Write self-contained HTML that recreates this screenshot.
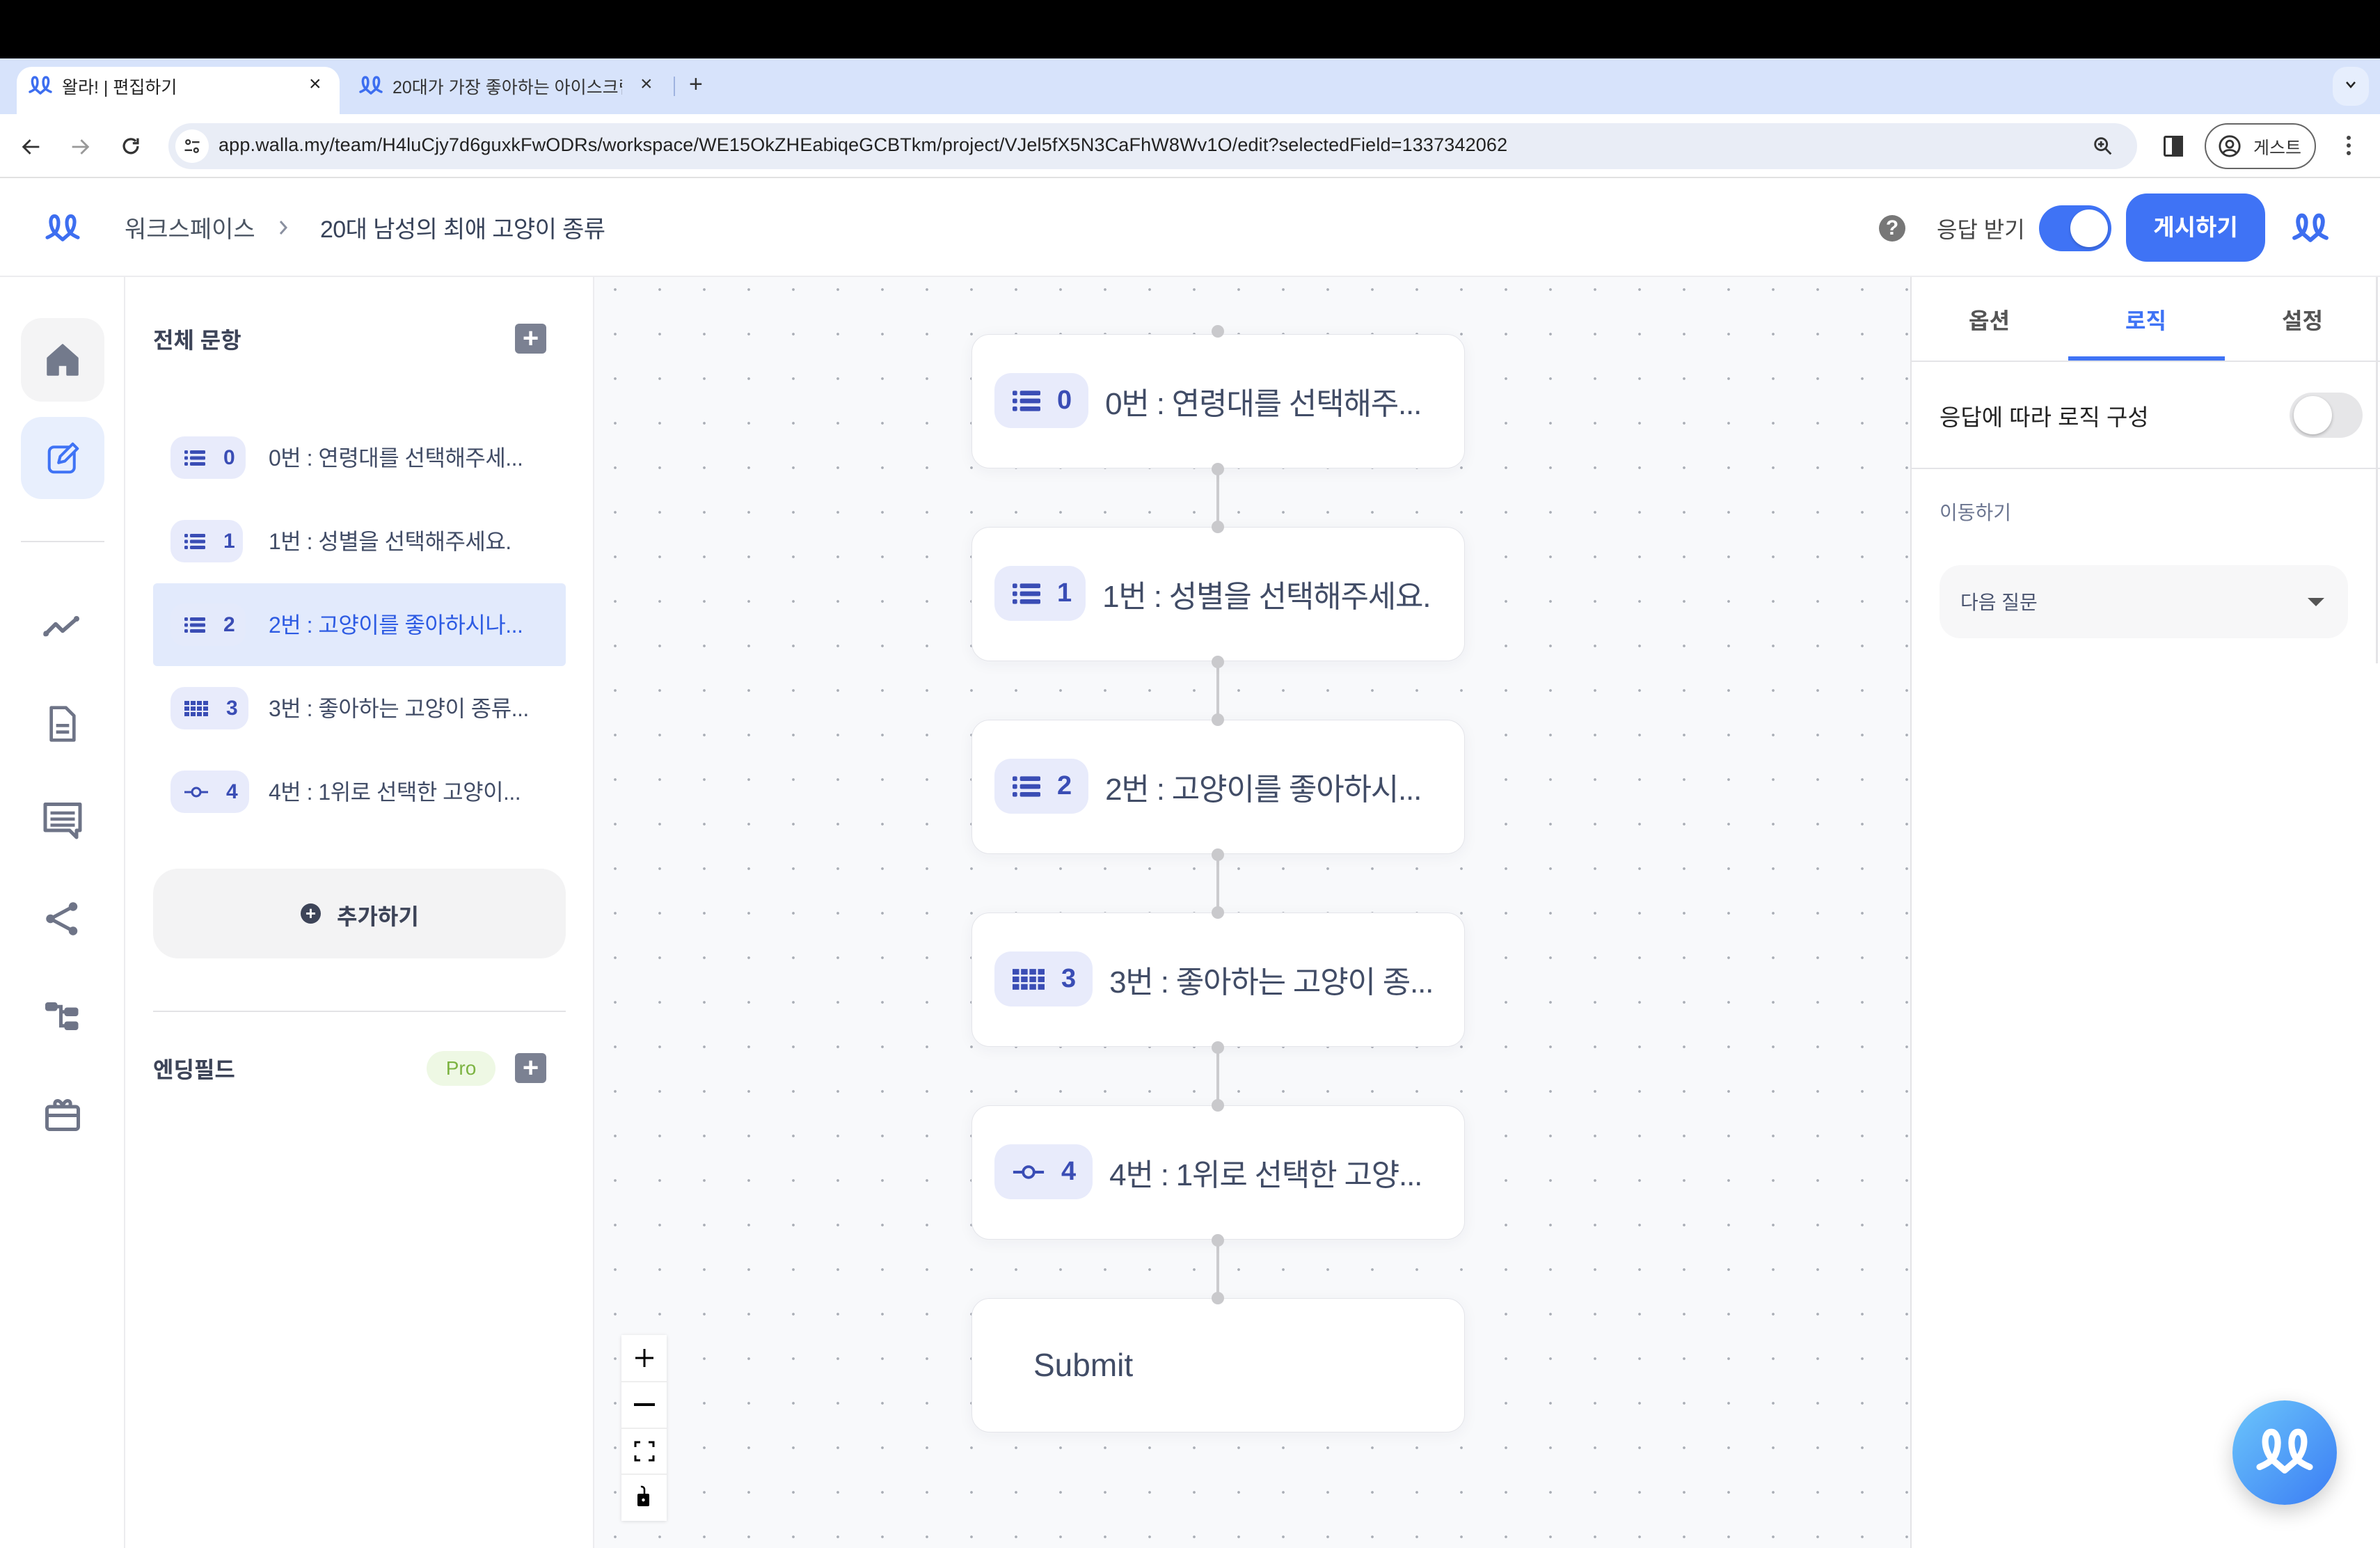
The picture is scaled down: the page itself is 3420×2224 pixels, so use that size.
<!DOCTYPE html>
<html><head><meta charset="utf-8"><style>
*{margin:0;padding:0;box-sizing:border-box}
body{width:3420px;height:2224px;position:relative;overflow:hidden;background:#fff;font-family:"Liberation Sans","Noto Sans CJK KR",sans-serif;}
.a{position:absolute}
.t{white-space:nowrap}
.card{position:absolute;left:1396px;width:709px;height:193px;background:#fff;border:1.5px solid #e4e5ea;border-radius:26px;box-shadow:0 4px 22px rgba(30,40,80,.05)}
.card .row{position:absolute;left:32px;top:55px;height:79px;display:flex;align-items:center}
.bdg{height:79px;border-radius:24px;background:#e8ebfb;display:flex;align-items:center;padding:0 24px 0 26px;gap:24px;color:#3a4db5;font-size:38px;font-weight:bold}
.ct{margin-left:24px;font-size:44px;color:#414c66;white-space:nowrap;letter-spacing:-1.2px}
.h{position:absolute;width:18px;height:18px;border-radius:50%;background:#c9c9cc;left:1741px}
.ln{position:absolute;left:1748px;width:4px;background:#cbcbce}
.li{position:absolute;left:220px;width:593px;height:119px;display:flex;align-items:center}
.lb{margin-left:25px;width:108px;height:61px;border-radius:20px;background:#e8ebfb;display:flex;align-items:center;padding-left:20px;gap:26px;color:#3a4db5;font-size:30px;font-weight:bold}
.lt{margin-left:33px;font-size:32px;color:#414c66;white-space:nowrap;letter-spacing:-0.5px;margin-top:-3px}
</style></head><body>
<div class="a" style="left:0;top:0;width:3420px;height:84px;background:#000"></div>
<div class="a" style="left:0;top:84px;width:3420px;height:80px;background:#d7e3fb"></div>
<div class="a" style="left:24px;top:96px;width:464px;height:70px;background:#fff;border-radius:22px 22px 0 0"></div>
<svg class="a" style="left:40px;top:108px" width="36" height="30" viewBox="0 0 34 30"><path d="M2 24 Q7 22 10 19 C14 14 14 3 9 3 C4 3 4 14 10 20 L17 26 L24 20 C30 14 30 3 25 3 C20 3 20 14 24 19 Q27 22 32 24" fill="none" stroke="#3d6ef0" stroke-width="3.5" stroke-linecap="round" stroke-linejoin="round"/></svg>
<div class="a t" style="left:89px;top:106px;font-size:25px;color:#222">왈라! | 편집하기</div>
<div class="a t" style="left:444px;top:104px;font-size:30px;color:#222">×</div>
<svg class="a" style="left:515px;top:108px" width="36" height="30" viewBox="0 0 34 30"><path d="M2 24 Q7 22 10 19 C14 14 14 3 9 3 C4 3 4 14 10 20 L17 26 L24 20 C30 14 30 3 25 3 C20 3 20 14 24 19 Q27 22 32 24" fill="none" stroke="#3d6ef0" stroke-width="3.5" stroke-linecap="round" stroke-linejoin="round"/></svg>
<div class="a t" style="left:564px;top:106px;font-size:25px;color:#333;width:330px;overflow:hidden">20대가 가장 좋아하는 아이스크림 🍦</div>
<div class="a t" style="left:920px;top:104px;font-size:30px;color:#333">×</div>
<div class="a" style="left:968px;top:110px;width:2px;height:28px;background:#9fb3e0"></div>
<div class="a t" style="left:990px;top:102px;font-size:34px;color:#333">+</div>
<div class="a" style="left:3352px;top:96px;width:52px;height:56px;background:#e6eefd;border-radius:20px"></div>
<svg class="a" style="left:3369px;top:115px" width="18" height="14"><path d="M3 3 L9 10 L15 3" fill="none" stroke="#222" stroke-width="2.5"/></svg>
<div class="a" style="left:0;top:164px;width:3420px;height:92px;background:#fff;border-bottom:2px solid #e1e1e1"></div>
<svg class="a" style="left:28px;top:194px" width="34" height="34" viewBox="0 0 24 24"><path d="M20 12H5M11 5l-7 7 7 7" fill="none" stroke="#333" stroke-width="2"/></svg>
<svg class="a" style="left:98px;top:194px" width="34" height="34" viewBox="0 0 24 24"><path d="M4 12h15M13 5l7 7-7 7" fill="none" stroke="#999" stroke-width="2"/></svg>
<svg class="a" style="left:171px;top:193px" width="34" height="34" viewBox="0 0 24 24"><path d="M19 12a7 7 0 1 1-2-5M19 4v5h-5" fill="none" stroke="#333" stroke-width="2.3"/></svg>
<div class="a" style="left:242px;top:177px;width:2829px;height:66px;background:#e9edf6;border-radius:33px"></div>
<div class="a" style="left:252px;top:186px;width:48px;height:48px;background:#fff;border-radius:50%"></div>
<svg class="a" style="left:262px;top:196px" width="28" height="28" viewBox="0 0 24 24"><circle cx="7" cy="7" r="2.5" fill="none" stroke="#333" stroke-width="2"/><path d="M12 7h9M3 17h9" stroke="#333" stroke-width="2"/><circle cx="17" cy="17" r="2.5" fill="none" stroke="#333" stroke-width="2"/></svg>
<div class="a t" style="left:314px;top:193px;font-size:27px;color:#222;letter-spacing:0.15px">app.walla.my/team/H4luCjy7d6guxkFwODRs/workspace/WE15OkZHEabiqeGCBTkm/project/VJel5fX5N3CaFhW8Wv1O/edit?selectedField=1337342062</div>
<svg class="a" style="left:3005px;top:193px" width="34" height="34" viewBox="0 0 24 24"><circle cx="10" cy="10" r="6" fill="none" stroke="#333" stroke-width="2"/><path d="M14.5 14.5L20 20M10 7v6M7 10h6" stroke="#333" stroke-width="2"/></svg>
<div class="a" style="left:3109px;top:195px;width:28px;height:30px;border:3px solid #333;border-radius:3px"></div>
<div class="a" style="left:3121px;top:195px;width:16px;height:30px;background:#333"></div>
<div class="a" style="left:3168px;top:177px;width:160px;height:66px;border:2px solid #666;border-radius:33px"></div>
<svg class="a" style="left:3187px;top:193px" width="34" height="34" viewBox="0 0 24 24"><circle cx="12" cy="12" r="10" fill="none" stroke="#333" stroke-width="2"/><circle cx="12" cy="10" r="3.5" fill="none" stroke="#333" stroke-width="2"/><path d="M5.5 18.5c3-3.5 10-3.5 13 0" fill="none" stroke="#333" stroke-width="2"/></svg>
<div class="a t" style="left:3238px;top:193px;font-size:25px;color:#333">게스트</div>
<div class="a" style="left:3372px;top:195px;width:6px;height:6px;border-radius:50%;background:#444;box-shadow:0 11px 0 #444,0 22px 0 #444"></div>
<div class="a" style="left:0;top:257px;width:3420px;height:141px;background:#fff;border-bottom:2px solid #ececef"></div>
<svg class="a" style="left:64px;top:306px" width="52" height="44" viewBox="0 0 34 30"><path d="M2 24 Q7 22 10 19 C14 14 14 3 9 3 C4 3 4 14 10 20 L17 26 L24 20 C30 14 30 3 25 3 C20 3 20 14 24 19 Q27 22 32 24" fill="none" stroke="#3d6ef0" stroke-width="3.5" stroke-linecap="round" stroke-linejoin="round"/></svg>
<div class="a t" style="left:179px;top:302px;font-size:34px;color:#4b5563">워크스페이스</div>
<svg class="a" style="left:398px;top:314px" width="18" height="26"><path d="M5 4l8 9-8 9" fill="none" stroke="#8a90a0" stroke-width="3"/></svg>
<div class="a t" style="left:460px;top:302px;font-size:34px;color:#374259;letter-spacing:-0.6px">20대 남성의 최애 고양이 종류</div>
<div class="a" style="left:2700px;top:309px;width:38px;height:38px;border-radius:50%;background:#777;color:#fff;font-size:30px;font-weight:bold;text-align:center;line-height:38px">?</div>
<div class="a t" style="left:2783px;top:305px;font-size:32px;color:#444">응답 받기</div>
<div class="a" style="left:2930px;top:295px;width:104px;height:66px;border-radius:33px;background:#3f73f5"></div>
<div class="a" style="left:2975px;top:301px;width:54px;height:54px;border-radius:50%;background:#fff;box-shadow:0 2px 4px rgba(0,0,0,.2)"></div>
<div class="a" style="left:3055px;top:278px;width:200px;height:98px;border-radius:30px;background:#3f73f5;color:#fff;font-size:33px;font-weight:bold;text-align:center;line-height:98px">게시하기</div>
<svg class="a" style="left:3293px;top:305px" width="54" height="46" viewBox="0 0 34 30"><path d="M2 24 Q7 22 10 19 C14 14 14 3 9 3 C4 3 4 14 10 20 L17 26 L24 20 C30 14 30 3 25 3 C20 3 20 14 24 19 Q27 22 32 24" fill="none" stroke="#3d6ef0" stroke-width="3.8" stroke-linecap="round" stroke-linejoin="round"/></svg>
<div class="a" style="left:178px;top:398px;width:2px;height:1826px;background:#ececef"></div>
<div class="a" style="left:30px;top:457px;width:120px;height:120px;border-radius:30px;background:#f4f4f5"></div>
<svg class="a" style="left:62px;top:489px" width="56" height="56" viewBox="0 0 24 24"><path d="M3 11L12 3l9 8v10h-6v-6h-6v6H3z" fill="#737a8c" stroke="#737a8c" stroke-width="1.5" stroke-linejoin="round"/></svg>
<div class="a" style="left:30px;top:599px;width:120px;height:118px;border-radius:30px;background:#e8effd"></div>
<svg class="a" style="left:64px;top:631px" width="54" height="54" viewBox="0 0 24 24"><rect x="3" y="5" width="16" height="16" rx="3" fill="none" stroke="#3f73f5" stroke-width="1.8"/><path d="M9 15l1-4 8-8 3 3-8 8z" fill="#e8effd" stroke="#3f73f5" stroke-width="1.8" stroke-linejoin="round"/></svg>
<div class="a" style="left:30px;top:777px;width:120px;height:2px;background:#e3e3e6"></div>
<svg class="a" style="left:60px;top:869px" width="60" height="60" viewBox="0 0 24 24"><path d="M2 17l6-6 4 4 8-7" fill="none" stroke="#6e7487" stroke-width="2.2" stroke-linecap="round" stroke-linejoin="round"/><circle cx="2.5" cy="16.5" r="1.6" fill="#6e7487"/><circle cx="20" cy="8" r="1.6" fill="#6e7487"/></svg>
<svg class="a" style="left:62px;top:1010px" width="56" height="60" viewBox="0 0 24 24"><path d="M5 2h9l5 5v15H5z" fill="none" stroke="#6e7487" stroke-width="2" stroke-linejoin="round"/><path d="M8 13h8M8 17h8" stroke="#6e7487" stroke-width="2"/></svg>
<svg class="a" style="left:60px;top:1148px" width="60" height="60" viewBox="0 0 24 24"><path d="M2 3h20v15h-2v4l-4-4H2z" fill="none" stroke="#6e7487" stroke-width="2" stroke-linejoin="round"/><path d="M5 8h14M5 11.5h14M5 15h14" stroke="#6e7487" stroke-width="1.8"/></svg>
<svg class="a" style="left:60px;top:1290px" width="60" height="60" viewBox="0 0 24 24"><circle cx="5" cy="12" r="2.5" fill="#6e7487"/><circle cx="18" cy="5" r="2.5" fill="#6e7487"/><circle cx="18" cy="19" r="2.5" fill="#6e7487"/><path d="M5 12L18 5M5 12l13 7" stroke="#6e7487" stroke-width="2"/></svg>
<svg class="a" style="left:60px;top:1430px" width="60" height="60" viewBox="0 0 24 24"><rect x="2" y="4" width="7" height="5" rx="1.5" fill="#6e7487"/><rect x="13" y="7" width="8" height="5" rx="1.5" fill="#6e7487"/><rect x="13" y="15" width="8" height="5" rx="1.5" fill="#6e7487"/><path d="M9 6.5h2v11h2M11 9.5h2" fill="none" stroke="#6e7487" stroke-width="2"/></svg>
<svg class="a" style="left:60px;top:1570px" width="60" height="60" viewBox="0 0 24 24"><rect x="3" y="8" width="18" height="13" rx="1.5" fill="none" stroke="#6e7487" stroke-width="2"/><path d="M3 13h18M8 8c-2-4 3-5 4 0 1-5 6-4 4 0" fill="none" stroke="#6e7487" stroke-width="2"/></svg>
<div class="a" style="left:852px;top:398px;width:2px;height:1826px;background:#ececef"></div>
<div class="a t" style="left:220px;top:464px;font-size:32px;font-weight:bold;color:#3d4458">전체 문항</div>
<div class="a" style="left:740px;top:465px;width:45px;height:43px;border-radius:6px;background:#7b8192;color:#fff;font-size:40px;font-weight:bold;text-align:center;line-height:43px">+</div>
<div class="a" style="left:220px;top:838px;width:593px;height:119px;border-radius:6px;background:#e2eafc"></div>

<div class="li" style="top:598px"><div class="lb"><svg width="30" height="24" viewBox="0 0 30 24"><rect x="0" y="1" width="5" height="5" rx="1.5" fill="#3a4db5"/><rect x="8" y="1" width="22" height="5" rx="1.5" fill="#3a4db5"/><rect x="0" y="9.5" width="5" height="5" rx="1.5" fill="#3a4db5"/><rect x="8" y="9.5" width="22" height="5" rx="1.5" fill="#3a4db5"/><rect x="0" y="18" width="5" height="5" rx="1.5" fill="#3a4db5"/><rect x="8" y="18" width="22" height="5" rx="1.5" fill="#3a4db5"/></svg>0</div><div class="lt">0번 : 연령대를 선택해주세...</div></div>
<div class="li" style="top:718px"><div class="lb" style="width:104px"><svg width="30" height="24" viewBox="0 0 30 24"><rect x="0" y="1" width="5" height="5" rx="1.5" fill="#3a4db5"/><rect x="8" y="1" width="22" height="5" rx="1.5" fill="#3a4db5"/><rect x="0" y="9.5" width="5" height="5" rx="1.5" fill="#3a4db5"/><rect x="8" y="9.5" width="22" height="5" rx="1.5" fill="#3a4db5"/><rect x="0" y="18" width="5" height="5" rx="1.5" fill="#3a4db5"/><rect x="8" y="18" width="22" height="5" rx="1.5" fill="#3a4db5"/></svg>1</div><div class="lt" style="margin-left:37px">1번 : 성별을 선택해주세요.</div></div>
<div class="li" style="top:838px"><div class="lb" style="background:#e4eafb"><svg width="30" height="24" viewBox="0 0 30 24"><rect x="0" y="1" width="5" height="5" rx="1.5" fill="#3a4db5"/><rect x="8" y="1" width="22" height="5" rx="1.5" fill="#3a4db5"/><rect x="0" y="9.5" width="5" height="5" rx="1.5" fill="#3a4db5"/><rect x="8" y="9.5" width="22" height="5" rx="1.5" fill="#3a4db5"/><rect x="0" y="18" width="5" height="5" rx="1.5" fill="#3a4db5"/><rect x="8" y="18" width="22" height="5" rx="1.5" fill="#3a4db5"/></svg>2</div><div class="lt" style="color:#2d5be3">2번 : 고양이를 좋아하시나...</div></div>
<div class="li" style="top:958px"><div class="lb" style="width:112px"><svg width="34" height="22" viewBox="0 0 34 22"><g fill="#3a4db5"><rect x="0" y="0" width="7" height="6"/><rect x="9" y="0" width="7" height="6"/><rect x="18" y="0" width="7" height="6"/><rect x="27" y="0" width="7" height="6"/><rect x="0" y="8" width="7" height="6"/><rect x="9" y="8" width="7" height="6"/><rect x="18" y="8" width="7" height="6"/><rect x="27" y="8" width="7" height="6"/><rect x="0" y="16" width="7" height="6"/><rect x="9" y="16" width="7" height="6"/><rect x="18" y="16" width="7" height="6"/><rect x="27" y="16" width="7" height="6"/></g></svg>3</div><div class="lt" style="margin-left:29px">3번 : 좋아하는 고양이 종류...</div></div>
<div class="li" style="top:1078px"><div class="lb" style="width:113px"><svg width="34" height="20" viewBox="0 0 34 20"><path d="M0 10h10M24 10h10" stroke="#3a4db5" stroke-width="3"/><circle cx="17" cy="10" r="6" fill="none" stroke="#3a4db5" stroke-width="3"/></svg>4</div><div class="lt" style="margin-left:28px">4번 : 1위로 선택한 고양이...</div></div>

<div class="a" style="left:220px;top:1248px;width:593px;height:129px;border-radius:36px;background:#f3f3f4"></div>
<div class="a" style="left:432px;top:1298px;width:29px;height:29px;border-radius:50%;background:#3d4458;color:#fff;font-size:26px;font-weight:bold;text-align:center;line-height:29px">+</div>
<div class="a t" style="left:484px;top:1292px;font-size:32px;font-weight:bold;color:#3d4458">추가하기</div>
<div class="a" style="left:220px;top:1452px;width:593px;height:2px;background:#e3e3e6"></div>
<div class="a t" style="left:220px;top:1512px;font-size:32px;font-weight:bold;color:#3d4458">엔딩필드</div>
<div class="a" style="left:613px;top:1510px;width:99px;height:50px;border-radius:25px;background:#eef8e4;color:#7cb342;font-size:28px;text-align:center;line-height:50px">Pro</div>
<div class="a" style="left:740px;top:1513px;width:45px;height:43px;border-radius:6px;background:#7b8192;color:#fff;font-size:40px;font-weight:bold;text-align:center;line-height:43px">+</div>
<div class="a" style="left:854px;top:398px;width:1891px;height:1826px;background-color:#f8f9fb;background-image:radial-gradient(circle,#a9adb5 1.6px,transparent 2.2px);background-size:64px 64px;background-position:-2px -14px"></div>
<div class="ln" style="top:674px;height:83px"></div>
<div class="ln" style="top:951px;height:83px"></div>
<div class="ln" style="top:1228px;height:83px"></div>
<div class="ln" style="top:1505px;height:83px"></div>
<div class="ln" style="top:1782px;height:83px"></div>
<div class="card" style="top:480px"><div class="row"><div class="bdg"><svg width="40" height="32" viewBox="0 0 30 24"><rect x="0" y="1" width="5" height="5" rx="1.5" fill="#3a4db5"/><rect x="8" y="1" width="22" height="5" rx="1.5" fill="#3a4db5"/><rect x="0" y="9.5" width="5" height="5" rx="1.5" fill="#3a4db5"/><rect x="8" y="9.5" width="22" height="5" rx="1.5" fill="#3a4db5"/><rect x="0" y="18" width="5" height="5" rx="1.5" fill="#3a4db5"/><rect x="8" y="18" width="22" height="5" rx="1.5" fill="#3a4db5"/></svg>0</div><div class="ct">0번 : 연령대를 선택해주...</div></div></div>
<div class="card" style="top:757px"><div class="row"><div class="bdg" style="padding-right:20px"><svg width="40" height="32" viewBox="0 0 30 24"><rect x="0" y="1" width="5" height="5" rx="1.5" fill="#3a4db5"/><rect x="8" y="1" width="22" height="5" rx="1.5" fill="#3a4db5"/><rect x="0" y="9.5" width="5" height="5" rx="1.5" fill="#3a4db5"/><rect x="8" y="9.5" width="22" height="5" rx="1.5" fill="#3a4db5"/><rect x="0" y="18" width="5" height="5" rx="1.5" fill="#3a4db5"/><rect x="8" y="18" width="22" height="5" rx="1.5" fill="#3a4db5"/></svg>1</div><div class="ct">1번 : 성별을 선택해주세요.</div></div></div>
<div class="card" style="top:1034px"><div class="row"><div class="bdg"><svg width="40" height="32" viewBox="0 0 30 24"><rect x="0" y="1" width="5" height="5" rx="1.5" fill="#3a4db5"/><rect x="8" y="1" width="22" height="5" rx="1.5" fill="#3a4db5"/><rect x="0" y="9.5" width="5" height="5" rx="1.5" fill="#3a4db5"/><rect x="8" y="9.5" width="22" height="5" rx="1.5" fill="#3a4db5"/><rect x="0" y="18" width="5" height="5" rx="1.5" fill="#3a4db5"/><rect x="8" y="18" width="22" height="5" rx="1.5" fill="#3a4db5"/></svg>2</div><div class="ct">2번 : 고양이를 좋아하시...</div></div></div>
<div class="card" style="top:1311px"><div class="row"><div class="bdg"><svg width="46" height="30" viewBox="0 0 34 22"><g fill="#3a4db5"><rect x="0" y="0" width="7" height="6"/><rect x="9" y="0" width="7" height="6"/><rect x="18" y="0" width="7" height="6"/><rect x="27" y="0" width="7" height="6"/><rect x="0" y="8" width="7" height="6"/><rect x="9" y="8" width="7" height="6"/><rect x="18" y="8" width="7" height="6"/><rect x="27" y="8" width="7" height="6"/><rect x="0" y="16" width="7" height="6"/><rect x="9" y="16" width="7" height="6"/><rect x="18" y="16" width="7" height="6"/><rect x="27" y="16" width="7" height="6"/></g></svg>3</div><div class="ct">3번 : 좋아하는 고양이 종...</div></div></div>
<div class="card" style="top:1588px"><div class="row"><div class="bdg"><svg width="46" height="26" viewBox="0 0 34 20"><path d="M0 10h10M24 10h10" stroke="#3a4db5" stroke-width="3"/><circle cx="17" cy="10" r="6" fill="none" stroke="#3a4db5" stroke-width="3"/></svg>4</div><div class="ct">4번 : 1위로 선택한 고양...</div></div></div>
<div class="card" style="top:1865px"><div class="a t" style="left:88px;top:68px;font-size:46px;color:#414c66">Submit</div></div>
<div class="h" style="top:467px"></div>
<div class="h" style="top:665px"></div><div class="h" style="top:748px"></div>
<div class="h" style="top:942px"></div><div class="h" style="top:1025px"></div>
<div class="h" style="top:1219px"></div><div class="h" style="top:1302px"></div>
<div class="h" style="top:1496px"></div><div class="h" style="top:1579px"></div>
<div class="h" style="top:1773px"></div><div class="h" style="top:1856px"></div>
<div class="a" style="left:893px;top:1918px;width:65px;height:267px;background:#fff;box-shadow:0 1px 5px rgba(0,0,0,.12)"></div>
<div class="a" style="left:893px;top:1984px;width:65px;height:2px;background:#eee"></div>
<div class="a" style="left:893px;top:2051px;width:65px;height:2px;background:#eee"></div>
<div class="a" style="left:893px;top:2117px;width:65px;height:2px;background:#eee"></div>
<svg class="a" style="left:910px;top:1935px" width="32" height="32"><path d="M16 3v26M3 16h26" stroke="#000" stroke-width="3"/></svg>
<div class="a" style="left:911px;top:2016px;width:30px;height:4px;background:#000"></div>
<svg class="a" style="left:911px;top:2070px" width="30" height="30"><path d="M2 9V2h7M21 2h7v7M28 21v7h-7M9 28H2v-7" fill="none" stroke="#000" stroke-width="3"/></svg>
<svg class="a" style="left:913px;top:2134px" width="26" height="32"><path d="M13 12V6a4 4 0 0 0-5-4" fill="none" stroke="#000" stroke-width="2.5"/><rect x="3" y="12" width="17" height="18" rx="2" fill="#000"/><circle cx="11.5" cy="21" r="2.2" fill="#fff"/></svg>
<div class="a" style="left:2745px;top:398px;width:2px;height:1826px;background:#e4e4e7"></div>
<div class="a" style="left:2747px;top:518px;width:673px;height:2px;background:#e4e4e7"></div>
<div class="a t" style="left:2829px;top:436px;font-size:32px;font-weight:bold;color:#555">옵션</div>
<div class="a t" style="left:3054px;top:436px;font-size:32px;font-weight:bold;color:#3f73f5">로직</div>
<div class="a t" style="left:3279px;top:436px;font-size:32px;font-weight:bold;color:#555">설정</div>
<div class="a" style="left:2972px;top:512px;width:225px;height:6px;background:#3f73f5"></div>
<div class="a t" style="left:2787px;top:573px;font-size:33px;color:#222">응답에 따라 로직 구성</div>
<div class="a" style="left:3290px;top:564px;width:105px;height:65px;border-radius:33px;background:#e6e6e8"></div>
<div class="a" style="left:3296px;top:569px;width:55px;height:55px;border-radius:50%;background:#fff;box-shadow:0 2px 5px rgba(0,0,0,.25)"></div>
<div class="a" style="left:2747px;top:672px;width:673px;height:2px;background:#e4e4e7"></div>
<div class="a t" style="left:2787px;top:715px;font-size:28px;color:#6b7590">이동하기</div>
<div class="a" style="left:2787px;top:812px;width:587px;height:105px;border-radius:30px;background:#f7f7f8"></div>
<div class="a t" style="left:2817px;top:844px;font-size:28px;color:#4b5570">다음 질문</div>
<svg class="a" style="left:3314px;top:857px" width="28" height="16"><path d="M2 2h24L14 14z" fill="#555"/></svg>
<div class="a" style="left:3414px;top:398px;width:3px;height:555px;background:#e4e4e7"></div>
<div class="a" style="left:3208px;top:2012px;width:150px;height:150px;border-radius:50%;background:linear-gradient(135deg,#6cc6fb,#3a7cf4);box-shadow:0 10px 30px rgba(0,0,0,.2)"></div>
<svg class="a" style="left:3242px;top:2050px" width="82" height="72" viewBox="0 0 34 30"><path d="M2 24 Q7 22 10 19 C14 14 14 3 9 3 C4 3 4 14 10 20 L17 26 L24 20 C30 14 30 3 25 3 C20 3 20 14 24 19 Q27 22 32 24" fill="none" stroke="#fff" stroke-width="3.8" stroke-linecap="round" stroke-linejoin="round"/></svg>
</body></html>
